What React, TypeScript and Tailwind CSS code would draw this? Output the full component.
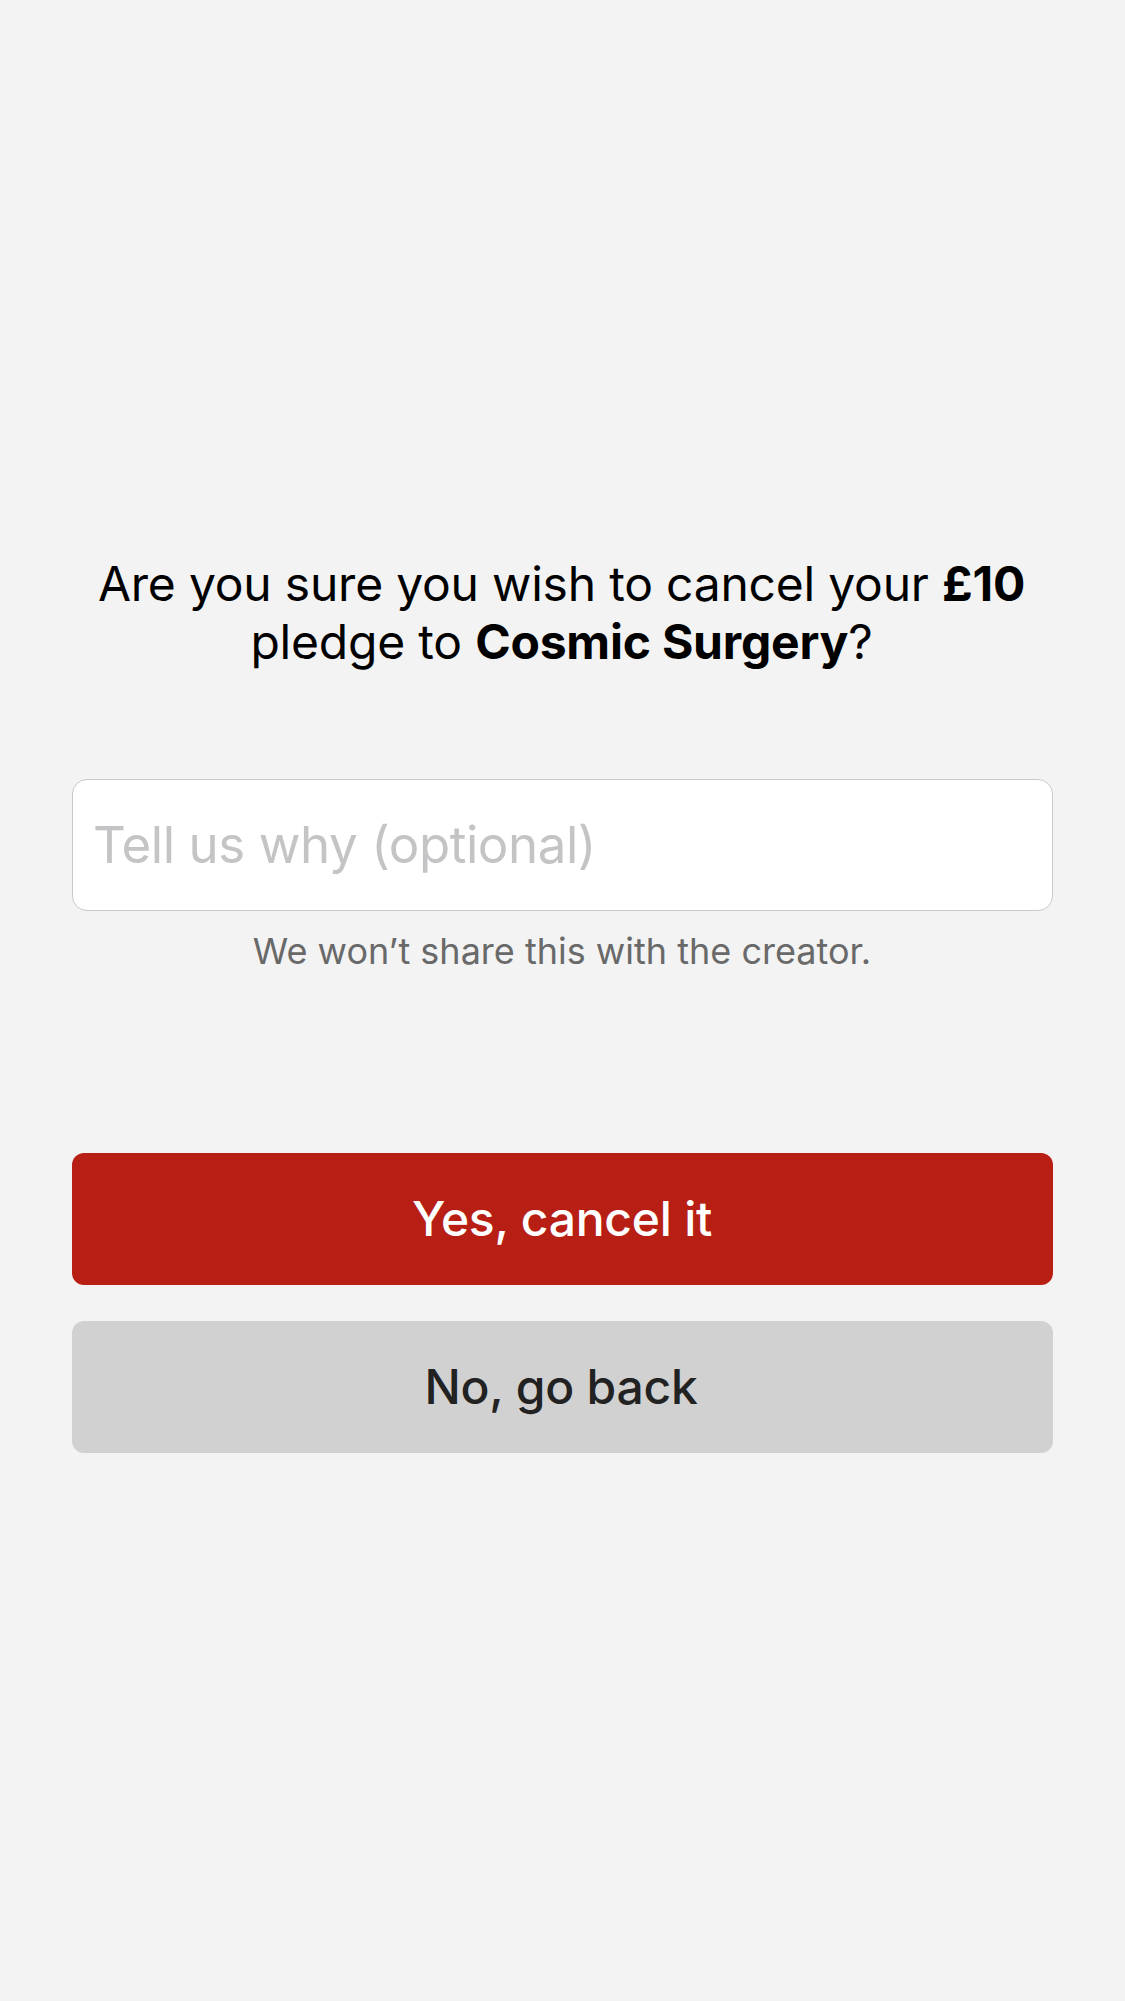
export default function App() {
  return (
    <main className="flex h-[2001px] w-full flex-col bg-[#f3f3f3] px-[72px] pt-[555px] font-['Inter',sans-serif] text-black">
      <p className="pr-[2px] text-center text-[48px] leading-[58px] tracking-[-0.21px]">
        Are you sure you wish to cancel your <strong className="font-bold">£10</strong>
        <br />
        pledge to <strong className="font-bold">Cosmic Surgery</strong>?
      </p>
      <input
        className="mt-[108px] h-[132px] w-full rounded-[15px] border border-[#c9c9c9] bg-white px-[20px] pb-[2px] text-[51px] tracking-[-0.43px] outline-none placeholder:text-[#c4c4c6] placeholder:opacity-100"
        placeholder="Tell us why (optional)"
      />
      <p className="mt-[18px] pr-px text-center text-[36px] leading-[44px] text-[#696969]">We won’t share this with the creator.</p>
      <div className="mt-[180px] flex flex-col gap-9">
        <button className="h-[132px] rounded-[12px] bg-[#b81f14] pr-px text-[48px] font-medium tracking-[-0.25px] text-white">Yes, cancel it</button>
        <button className="h-[132px] rounded-[12px] bg-[#d1d1d1] pr-[3px] text-[48px] font-medium tracking-[-0.24px] text-[#222222]">No, go back</button>
      </div>
    </main>
  );
}
